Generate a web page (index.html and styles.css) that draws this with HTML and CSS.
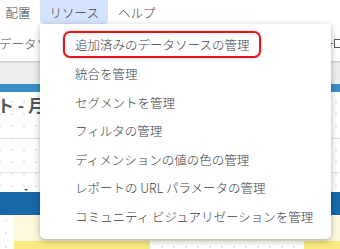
FILE: index.html
```html
<!DOCTYPE html>
<html>
<head>
<title>リソース メニュー</title>
<link rel="stylesheet" href="styles.css">
</head>
<body>
<div class="page">
<div class="menubar">
<span class="menu-item">配置</span>
<span class="menu-item active">リソース</span>
<span class="menu-item">ヘルプ</span>
</div>
<div class="toolbar">
<span class="tb-text">データソース</span>
<span class="tb-icon"><i class="dash"></i><i class="box"></i></span>
</div>
<div class="tabband"></div>
<div class="blueband"></div>
<div class="report">
<div class="title">ト - 月</div>
<div class="row first"></div>
<div class="row"><span class="caret"></span></div>
</div>
<div class="table-head"></div>
<div class="cells light">
<span class="cell blank"></span>
<span class="cell fill"></span>
</div>
<div class="cells strong">
<span class="cell blank"></span>
<span class="cell bar1"></span>
<span class="cell gap"></span>
<span class="cell bar2"></span>
</div>

<!-- dropdown for リソース -->
<div class="dropdown">
<div class="dd-item"><span class="marked">追加済みのデータソースの管理</span></div>
<div class="dd-item">統合を管理</div>
<div class="dd-item">セグメントを管理</div>
<div class="dd-item">フィルタの管理</div>
<div class="dd-item">ディメンションの値の色の管理</div>
<div class="dd-item">レポートの URL パラメータの管理</div>
<div class="dd-item">コミュニティ ビジュアリゼーションを管理</div>
</div>
</div>
</body>
</html>
```

FILE: styles.css
```css
* {
  box-sizing: border-box;
}
body {
  margin: 0;
  font-family: "Noto Sans CJK JP", "Noto Sans", sans-serif;
  background: #fff;
}
.page {
  position: relative;
  width: 340px;
  height: 249px;
  overflow: hidden;
}
.menubar {
  display: flex;
  height: 24px;
  margin-left: -4px;
  align-items: stretch;
}
.menu-item {
  display: flex;
  align-items: center;
  padding: 0 9.5px;
  font-size: 12.5px;
  font-weight: 300;
  color: #3c4043;
  border-radius: 0 0 4px 4px;
}
.menu-item.active {
  background-color: #d3e3fd;
}
.toolbar {
  display: flex;
  justify-content: space-between;
  align-items: center;
  height: 38px;
  border-bottom: 1px solid #cfcfcf;
}
.tb-text {
  font-size: 12.5px;
  font-weight: 300;
  color: #4a4f55;
  margin-left: -1px;
  padding-top: 2px;
}
.tb-icon {
  display: flex;
  align-items: center;
  gap: 1px;
  padding-top: 2px;
  margin-right: -3px;
}
.tb-icon .dash {
  width: 3px;
  height: 1px;
  background: #5f6368;
}
.tb-icon .box {
  width: 9px;
  height: 9px;
  border: 1px solid #5f6368;
}
.tabband {
  height: 22px;
  background: #ededed;
  border-top: 1px solid #e0e0e0;
}
.blueband {
  height: 8px;
  background: #3a8dc9;
}
.report {
  height: 100px;
  background-color: #fff;
  background-image: radial-gradient(circle, #e6e6e6 0.8px, transparent 1px);
  background-size: 12px 12px;
  background-position: 6px 4px;
}
.title {
  font-size: 17px;
  font-weight: bold;
  color: #555;
  height: 46px;
  margin-left: -3px;
}
.row {
  height: 34px;
  border-top: 1px solid #e2e2e2;
  position: relative;
}
.row .caret {
  position: absolute;
  left: 24px;
  top: 16px;
  border-left: 2px solid transparent;
  border-right: 2px solid transparent;
  border-top: 2px solid #555;
}
.row + .row {
  height: 20px;
}
.table-head {
  height: 23px;
  background: #1769aa;
}
.cells {
  display: flex;
  background-image: radial-gradient(circle, #e6e6e6 0.8px, transparent 1px);
  background-size: 12px 12px;
}
.cells.light {
  height: 26px;
}
.cells.strong {
  height: 8px;
}
.cell.blank {
  width: 14px;
}
.cell.fill {
  flex: 1;
  background: #fdf8dd;
}
.cell.bar1 {
  width: 136px;
  background: #f9ea80;
}
.cell.gap {
  width: 154px;
}
.cell.bar2 {
  flex: 1;
  background: #f9ea80;
}
.dropdown {
  position: absolute;
  left: 40px;
  top: 24px;
  width: 291px;
  padding: 7px 0 8px;
  background: #fff;
  border-radius: 0 0 5px 5px;
  box-shadow: 0 2px 6px rgba(0, 0, 0, 0.3);
}
.dd-item {
  height: 28.5px;
  display: flex;
  align-items: center;
  padding-left: 35px;
  font-size: 12.5px;
  font-weight: 300;
  color: #3c4043;
  white-space: nowrap;
}
.marked {
  margin: -1px -12px 0;
  padding: 2px 10px;
  border: 2px solid #e8141a;
  border-radius: 7px;
  box-shadow: 0 0 2px rgba(0, 0, 0, 0.35);
}
```
